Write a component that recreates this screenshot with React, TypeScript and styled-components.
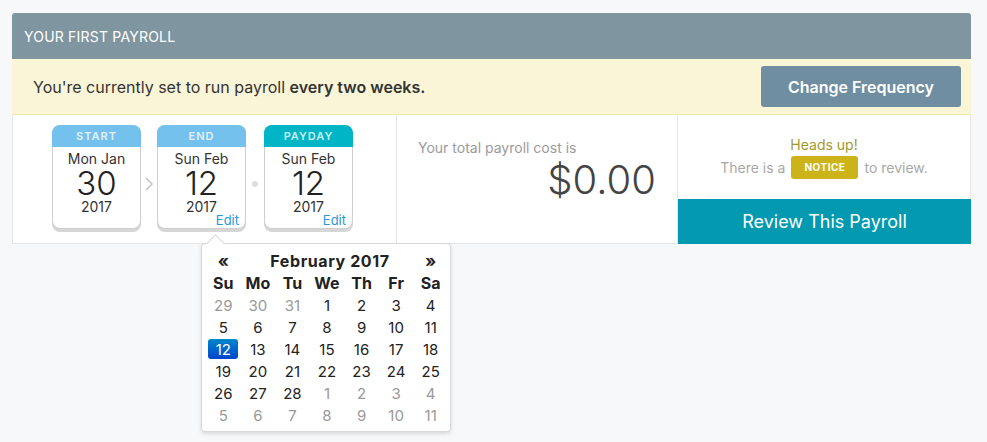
import React from 'react'
import styled, { createGlobalStyle } from 'styled-components'

const GlobalStyle = createGlobalStyle`
  html, body {
    margin: 0;
    background: #f7f8fa;
    font-family: Inter, 'Noto Sans', sans-serif;
    color: #333;
  }
  #root {
    min-height: 442px;
  }
`

interface DateCardData {
  label: string
  weekday: string
  day: string
  year: string
  tone: 'blue' | 'teal'
  editable?: boolean
}

const cards: DateCardData[] = [
  { label: 'START', weekday: 'Mon Jan', day: '30', year: '2017', tone: 'blue' },
  { label: 'END', weekday: 'Sun Feb', day: '12', year: '2017', tone: 'blue', editable: true },
  { label: 'PAYDAY', weekday: 'Sun Feb', day: '12', year: '2017', tone: 'teal', editable: true },
]

const weekdays = ['Su', 'Mo', 'Tu', 'We', 'Th', 'Fr', 'Sa']

const weeks: { d: number; muted?: boolean }[][] = [
  [{ d: 29, muted: true }, { d: 30, muted: true }, { d: 31, muted: true }, { d: 1 }, { d: 2 }, { d: 3 }, { d: 4 }],
  [{ d: 5 }, { d: 6 }, { d: 7 }, { d: 8 }, { d: 9 }, { d: 10 }, { d: 11 }],
  [{ d: 12 }, { d: 13 }, { d: 14 }, { d: 15 }, { d: 16 }, { d: 17 }, { d: 18 }],
  [{ d: 19 }, { d: 20 }, { d: 21 }, { d: 22 }, { d: 23 }, { d: 24 }, { d: 25 }],
  [{ d: 26 }, { d: 27 }, { d: 28 }, { d: 1, muted: true }, { d: 2, muted: true }, { d: 3, muted: true }, { d: 4, muted: true }],
  [5, 6, 7, 8, 9, 10, 11].map((d) => ({ d, muted: true })),
]

const Calendar: React.FC = () => (
  <Popup>
    <PopupArrow />
    <CalTable>
      <thead>
        <tr>
          <NavCell>«</NavCell>
          <MonthCell colSpan={5}>February 2017</MonthCell>
          <NavCell>»</NavCell>
        </tr>
        <tr>
          {weekdays.map((w) => (
            <DowCell key={w}>{w}</DowCell>
          ))}
        </tr>
      </thead>
      <tbody>
        {weeks.map((week, i) => (
          <tr key={i}>
            {week.map((c, j) => (
              <DayCell key={j} $muted={c.muted}>
                {!c.muted && c.d === 12 ? <Selected>{c.d}</Selected> : c.d}
              </DayCell>
            ))}
          </tr>
        ))}
      </tbody>
    </CalTable>
  </Popup>
)

const DateCard: React.FC<{ card: DateCardData; children?: React.ReactNode }> = ({ card, children }) => (
  <Card>
    <CardHead $tone={card.tone}>{card.label}</CardHead>
    <CardBody>
      <Weekday>{card.weekday}</Weekday>
      <DayNum>{card.day}</DayNum>
      <Year>{card.year}</Year>
      {card.editable && <EditLink>Edit</EditLink>}
    </CardBody>
    {children}
  </Card>
)

const App: React.FC = () => (
  <>
    <GlobalStyle />
    <Panel>
      <Header>YOUR FIRST PAYROLL</Header>
      <FrequencyBar>
        <span>
          You're currently set to run payroll <strong>every two weeks.</strong>
        </span>
        <FrequencyButton>Change Frequency</FrequencyButton>
      </FrequencyBar>
      <Summary>
        <DatesSection>
          <DateCard card={cards[0]} />
          <Separator>
            <svg width='10' height='16' viewBox='0 0 10 16'>
              <polyline points='2,2 8,8 2,14' fill='none' stroke='#c4c4c4' strokeWidth='1.5' />
            </svg>
          </Separator>
          <DateCard card={cards[1]}>
            <Calendar />
          </DateCard>
          <Separator $wide>
            <Dot />
          </Separator>
          <DateCard card={cards[2]} />
        </DatesSection>
        <CostSection>
          <CostLabel>Your total payroll cost is</CostLabel>
          <CostValue>$0.00</CostValue>
        </CostSection>
        <ReviewSection>
          <Notice>
            <HeadsUp>Heads up!</HeadsUp>
            <NoticeLine>
              There is a <Badge>NOTICE</Badge> to review.
            </NoticeLine>
          </Notice>
          <ReviewButton>Review This Payroll</ReviewButton>
        </ReviewSection>
      </Summary>
    </Panel>
  </>
)

const Panel = styled.div`
  width: 959px;
  margin: 0 0 0 12px;
  padding-top: 13px;
`

const Header = styled.div`
  height: 46px;
  display: flex;
  align-items: center;
  padding-left: 12px;
  background: #7f959f;
  color: #fff;
  font-size: 14px;
  letter-spacing: 0.2px;
  border-radius: 3px 3px 0 0;
`

const FrequencyBar = styled.div`
  height: 56px;
  box-sizing: border-box;
  display: flex;
  align-items: center;
  justify-content: space-between;
  padding: 0 10px 0 21px;
  background: #faf5d7;
  border-bottom: 1px solid #efe6b0;
  font-size: 16px;
  color: #333;

  strong {
    font-weight: 600;
  }
`

const FrequencyButton = styled.button`
  width: 200px;
  height: 41px;
  border: none;
  border-radius: 3px;
  background: #6f8ea2;
  color: #fff;
  font-family: inherit;
  font-size: 16px;
  font-weight: 600;
  cursor: pointer;
`

const Summary = styled.div`
  display: flex;
  height: 129px;
  background: #fff;
  border: 1px solid #e6e6e6;
  border-top: none;
  box-sizing: border-box;
`

const DatesSection = styled.div`
  width: 383px;
  box-sizing: border-box;
  display: flex;
  align-items: flex-start;
  padding: 10px 0 0 39px;
`

const Card = styled.div`
  position: relative;
  width: 89px;
  height: 104px;
  box-sizing: border-box;
  border: 1px solid #cfcfcf;
  border-radius: 8px;
  box-shadow: 0 3px 0 #d6d6d6;
  background: #fff;
`

const CardHead = styled.div<{ $tone: 'blue' | 'teal' }>`
  height: 22px;
  margin: -1px -1px 0;
  border-radius: 8px 8px 0 0;
  background: ${(p) => (p.$tone === 'teal' ? '#00b5c6' : '#74c1ed')};
  color: rgba(255, 255, 255, 0.8);
  font-size: 11px;
  font-weight: 600;
  letter-spacing: 1px;
  display: flex;
  align-items: center;
  justify-content: center;
`

const CardBody = styled.div`
  position: relative;
  display: flex;
  flex-direction: column;
  align-items: center;
  padding-top: 3px;
  color: #333;
`

const Weekday = styled.div`
  font-size: 14px;
  line-height: 17px;
`

const DayNum = styled.div`
  font-size: 33px;
  font-weight: 300;
  line-height: 33px;
  color: #222;
`

const Year = styled.div`
  font-size: 14px;
  line-height: 14px;
`

const EditLink = styled.a`
  position: absolute;
  right: 6px;
  bottom: -13px;
  font-size: 13px;
  line-height: 13px;
  color: #2a96d6;
`

const Separator = styled.div<{ $wide?: boolean }>`
  width: ${(p) => (p.$wide ? '18px' : '16px')};
  height: 104px;
  display: flex;
  align-items: center;
  justify-content: center;
  padding-top: 14px;
  box-sizing: border-box;
`

const Dot = styled.span`
  width: 6px;
  height: 6px;
  border-radius: 50%;
  background: #ddd;
`

const CostSection = styled.div`
  width: 281px;
  box-sizing: border-box;
  border-left: 1px solid #e6e6e6;
  padding: 24px 21px 0 21px;
  display: flex;
  flex-direction: column;
`

const CostLabel = styled.div`
  font-size: 14px;
  color: #9b9b9b;
`

const CostValue = styled.div`
  align-self: flex-end;
  font-size: 40px;
  font-weight: 300;
  color: #444;
  line-height: 48px;
`

const ReviewSection = styled.div`
  flex: 1;
  border-left: 1px solid #e6e6e6;
  display: flex;
  flex-direction: column;
`

const Notice = styled.div`
  flex: 1;
  display: flex;
  flex-direction: column;
  align-items: center;
  justify-content: center;
  gap: 3px;
`

const HeadsUp = styled.div`
  font-size: 14px;
  color: #a3992c;
`

const NoticeLine = styled.div`
  font-size: 14px;
  color: #a8a8a8;
  display: flex;
  align-items: center;
  gap: 6px;
`

const Badge = styled.span`
  width: 67px;
  height: 23px;
  border-radius: 3px;
  background: #cbb319;
  color: #fff;
  font-size: 10px;
  font-weight: 700;
  letter-spacing: 0.5px;
  display: inline-flex;
  align-items: center;
  justify-content: center;
`

const ReviewButton = styled.button`
  height: 45px;
  margin: 0 -1px -1px 0;
  border: none;
  background: #0399b0;
  color: #fff;
  font-family: inherit;
  font-size: 18px;
  cursor: pointer;
`

const Popup = styled.div`
  position: absolute;
  left: 43px;
  top: 117px;
  z-index: 2;
  width: 250px;
  box-sizing: border-box;
  padding: 6px 3px 5px 4px;
  background: #fff;
  border: 1px solid #d8d8d8;
  border-radius: 4px;
  box-shadow: 0 2px 4px rgba(0, 0, 0, 0.12);
`

const PopupArrow = styled.span`
  position: absolute;
  top: -7px;
  left: 7px;
  width: 12px;
  height: 12px;
  background: #fff;
  border-left: 1px solid #d8d8d8;
  border-top: 1px solid #d8d8d8;
  transform: rotate(45deg);
`

const CalTable = styled.table`
  position: relative;
  width: 242px;
  table-layout: fixed;
  border-collapse: collapse;
  font-size: 15px;
  color: #222;

  td,
  th {
    height: 22px;
    padding: 0;
    text-align: center;
  }
`

const NavCell = styled.th`
  font-weight: 700;
  font-size: 17px;
`

const MonthCell = styled.th`
  font-weight: 700;
  font-size: 16px;
  letter-spacing: 0.6px;
  padding-left: 6px !important;
`

const DowCell = styled.th`
  font-weight: 700;
  font-size: 16px;
`

const DayCell = styled.td<{ $muted?: boolean }>`
  color: ${(p) => (p.$muted ? '#999' : '#222')};
`

const Selected = styled.span`
  display: inline-flex;
  align-items: center;
  justify-content: center;
  width: 30px;
  height: 20px;
  border-radius: 3px;
  color: #fff;
  background: linear-gradient(#0088cc, #0044cc);
`

export default App
